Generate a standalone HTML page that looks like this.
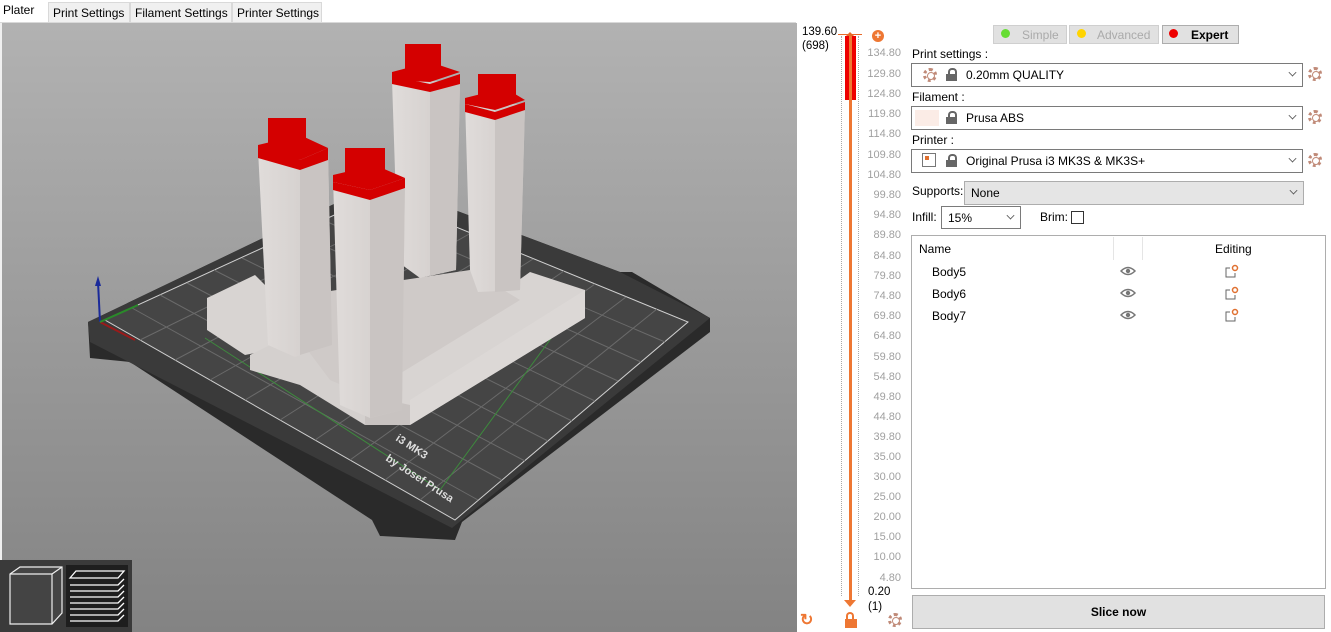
<!DOCTYPE html>
<html><head><meta charset="utf-8"><style>
*{box-sizing:border-box;margin:0;padding:0}
body{width:1331px;height:632px;overflow:hidden;background:#fff;font-family:"Liberation Sans",sans-serif;font-size:12px;color:#000;position:relative}
.abs{position:absolute}
.tab{position:absolute;top:2px;height:20px;border:1px solid #d9d9d9;border-bottom:none;background:#f0f0f0;font-size:12px;padding:3px 4px 0 4px;white-space:nowrap}
.lbl{position:absolute;font-size:12px}
.combo{position:absolute;height:24px;border:1px solid #7a7a7a;background:#fff;font-size:12px;padding:4px 0 0 6px}
.combo .arr{position:absolute;right:6px;top:5px;width:7px;height:7px;border-right:1px solid #555;border-bottom:1px solid #555;transform:rotate(45deg) scale(.8)}
.tick{position:absolute;right:0;font-size:11px;color:#a0a0a0;width:40px;text-align:right}
.gear{position:absolute;width:14px;height:14px;border-radius:50%;border:3px dotted #c08a78;background:#fff}
.gear:after{content:"";position:absolute;left:1px;top:1px;width:6px;height:6px;border-radius:50%;border:1px solid #c08a78}
.lock{position:absolute;width:11px;height:13px}
.lock:before{content:"";position:absolute;left:2px;top:0;width:5px;height:6px;border:2px solid #666;border-bottom:none;border-radius:4px 4px 0 0}
.lock:after{content:"";position:absolute;left:0;top:6px;width:11px;height:7px;background:#666}
</style></head><body>
<div class="abs" style="left:0;top:22px;width:796px;height:1px;background:#d9d9d9"></div>
<div class="abs" style="left:3px;top:3px;font-size:12px">Plater</div>
<div class="tab" style="left:48px;width:82px">Print Settings</div>
<div class="tab" style="left:130px;width:102px">Filament Settings</div>
<div class="tab" style="left:232px;width:90px">Printer Settings</div>

<svg class="abs" style="left:0;top:23px" width="797" height="609" viewBox="0 23 797 609">
<defs>
<linearGradient id="bg" x1="0" y1="0" x2="0" y2="1"><stop offset="0" stop-color="#b2b2b2"/><stop offset="1" stop-color="#838383"/></linearGradient>
<linearGradient id="tw" x1="0" y1="0" x2="1" y2="0"><stop offset="0" stop-color="#e0dcda"/><stop offset="1" stop-color="#cfcac8"/></linearGradient>
</defs>
<rect x="0" y="23" width="797" height="609" fill="url(#bg)"/>
<rect x="0" y="23" width="2" height="609" fill="#f0f0f0"/>
<!-- bed -->
<polygon points="88,322 380,182 620,272 632,272 710,318 710,332 462,522 455,540 380,536 372,520 130,362 90,358" fill="#2a2a2a"/>
<polygon points="88,322 380,182 620,272 710,318 452,528 90,342" fill="#3a3a3a"/>
<polygon points="105,320 378,195 688,322 455,520" fill="#454545" stroke="#d0d0d0" stroke-width="1"/>
<g stroke="#6a6a6a" stroke-width="1">
<line x1="140" y1="340" x2="409" y2="208"/><line x1="175" y1="360" x2="440" y2="220"/><line x1="210" y1="380" x2="471" y2="233"/><line x1="245" y1="400" x2="502" y2="246"/><line x1="280" y1="420" x2="533" y2="259"/><line x1="315" y1="440" x2="564" y2="271"/><line x1="350" y1="460" x2="595" y2="284"/><line x1="385" y1="480" x2="626" y2="297"/><line x1="420" y1="500" x2="657" y2="309"/>
<line x1="132" y1="308" x2="478" y2="500"/><line x1="160" y1="295" x2="502" y2="480"/><line x1="187" y1="283" x2="525" y2="461"/><line x1="214" y1="270" x2="548" y2="441"/><line x1="242" y1="258" x2="572" y2="421"/><line x1="269" y1="245" x2="595" y2="401"/><line x1="296" y1="233" x2="618" y2="381"/><line x1="323" y1="220" x2="641" y2="362"/><line x1="351" y1="208" x2="665" y2="342"/>
</g>
<polyline points="205,338 440,490 585,292" fill="none" stroke="#3d8a3d" stroke-width="1"/>
<text x="385" y="460" fill="#ddd" font-size="11" font-weight="bold" transform="rotate(33 385 460)" font-family="Liberation Sans">by Josef Prusa</text>
<text x="395" y="440" fill="#ddd" font-size="11" font-weight="bold" transform="rotate(33 395 440)" font-family="Liberation Sans">i3 MK3</text>
<line x1="100" y1="322" x2="98" y2="282" stroke="#1a2a9a" stroke-width="2"/>
<polygon points="95,286 98,276 101,286" fill="#1a2a9a"/>
<line x1="100" y1="322" x2="135" y2="340" stroke="#9a1a1a" stroke-width="2"/>
<line x1="100" y1="322" x2="138" y2="305" stroke="#2a8a2a" stroke-width="2"/>
<!-- base blocks -->
<polygon points="207,298 255,275 270,290 270,350 245,355 207,330" fill="#d8d4d2"/>
<polygon points="250,355 300,330 340,360 365,395 365,425 300,385 250,370" fill="#d4d0ce"/>
<polygon points="365,390 530,272 585,290 585,318 410,425 365,425" fill="#d8d4d2"/>
<polygon points="365,395 410,405 410,425 365,425" fill="#c8c3c1"/>
<polygon points="410,400 585,290 585,318 410,425" fill="#dcd8d6"/>
<polygon points="270,300 470,270 520,300 365,395 330,380" fill="#cfcac8"/>
<!-- towers -->
<polygon points="258,150 300,150 328,150 332,345 295,357 268,345" fill="url(#tw)"/>
<polygon points="392,80 460,82 456,270 420,278 398,262" fill="url(#tw)"/>
<polygon points="465,100 525,105 520,290 478,292 470,270" fill="url(#tw)"/>
<polygon points="333,178 405,178 402,410 370,418 340,405" fill="url(#tw)"/>
<polygon points="300,155 328,150 332,345 300,355" fill="#c9c4c2"/>
<polygon points="430,82 460,82 456,270 430,276" fill="#c9c4c2"/>
<polygon points="495,104 525,105 520,290 495,292" fill="#c9c4c2"/>
<polygon points="370,180 405,180 402,410 370,418" fill="#c9c4c2"/>
<g fill="#d40000">
<polygon points="258,145 300,135 328,148 300,160 258,152"/><rect x="268" y="118" width="38" height="25"/><polygon points="258,145 300,160 300,170 258,158"/><polygon points="300,160 328,148 328,160 300,170"/>
<polygon points="333,175 375,165 405,178 370,190 333,182"/><rect x="345" y="148" width="40" height="25"/><polygon points="333,182 370,190 370,200 333,190"/><polygon points="370,190 405,178 405,188 370,200"/>
<polygon points="392,72 430,62 460,72 430,82 392,80"/><rect x="405" y="44" width="36" height="25"/><polygon points="392,76 430,84 430,92 392,84"/><polygon points="430,84 460,74 460,84 430,92"/>
<polygon points="465,98 505,88 525,100 495,110 465,104"/><rect x="478" y="74" width="38" height="25"/><polygon points="465,104 495,112 495,120 465,112"/><polygon points="495,112 525,102 525,110 495,120"/>
</g>
<rect x="0" y="560" width="132" height="72" fill="#3a3a3a"/>
<rect x="66" y="565" width="62" height="62" fill="#1e1e1e"/>
<polygon points="10,574 20,567 62,567 62,613 52,624 10,624" fill="#444" stroke="#eee" stroke-width="1.2"/>
<polyline points="10,574 52,574 52,624" fill="none" stroke="#eee" stroke-width="1.2"/><line x1="52" y1="574" x2="62" y2="567" stroke="#eee" stroke-width="1.2"/>
<g stroke="#fff" stroke-width="1.3" fill="none"><path d="M70 578l6-7h48l-6 7z"/><path d="M70 585h48l6-6M70 591h48l6-6M70 597h48l6-6M70 603h48l6-6M70 609h48l6-6M70 615h48l6-6M70 621h48l6-6"/></g>
</svg>

<div class="abs" style="left:797px;top:23px;width:112px;height:609px;background:#fff"></div>
<div class="abs" style="left:802px;top:25px;font-size:11.5px;line-height:14px">139.60<br>(698)</div>
<div class="abs" style="left:838px;top:34px;width:24px;height:1px;background:#e86a2a"></div>
<div class="abs" style="left:845px;top:32px;width:0;height:0;border-left:5px solid transparent;border-right:5px solid transparent;border-bottom:5px solid #e86a2a"></div>
<div class="abs" style="left:841px;top:36px;width:1px;height:560px;border-left:1px dotted #aaa"></div>
<div class="abs" style="left:858px;top:36px;width:1px;height:560px;border-left:1px dotted #aaa"></div>
<div class="abs" style="left:845px;top:36px;width:11px;height:64px;background:#e00"></div>
<div class="abs" style="left:849px;top:36px;width:3px;height:565px;background:#ee7733"></div>
<div class="abs" style="left:844px;top:600px;width:0;height:0;border-left:6px solid transparent;border-right:6px solid transparent;border-top:7px solid #ee7733"></div>
<div class="abs" style="left:872px;top:30px;width:12px;height:12px;border-radius:50%;background:#ee7733;color:#fff;font-size:11px;line-height:12px;text-align:center;font-weight:bold">+</div>
<div class="abs" style="left:857px;top:0;width:44px;height:632px">
<div class="tick" style="top:47px">134.80</div><div class="tick" style="top:68px">129.80</div><div class="tick" style="top:88px">124.80</div><div class="tick" style="top:108px">119.80</div><div class="tick" style="top:128px">114.80</div><div class="tick" style="top:149px">109.80</div><div class="tick" style="top:169px">104.80</div><div class="tick" style="top:189px">99.80</div><div class="tick" style="top:209px">94.80</div><div class="tick" style="top:229px">89.80</div><div class="tick" style="top:250px">84.80</div><div class="tick" style="top:270px">79.80</div><div class="tick" style="top:290px">74.80</div><div class="tick" style="top:310px">69.80</div><div class="tick" style="top:330px">64.80</div><div class="tick" style="top:351px">59.80</div><div class="tick" style="top:371px">54.80</div><div class="tick" style="top:391px">49.80</div><div class="tick" style="top:411px">44.80</div><div class="tick" style="top:431px">39.80</div><div class="tick" style="top:451px">35.00</div><div class="tick" style="top:471px">30.00</div><div class="tick" style="top:491px">25.00</div><div class="tick" style="top:511px">20.00</div><div class="tick" style="top:531px">15.00</div><div class="tick" style="top:551px">10.00</div><div class="tick" style="top:572px">4.80</div>
</div>
<div class="abs" style="left:868px;top:585px;font-size:11.5px;line-height:15px">0.20<br>(1)</div>
<div class="abs" style="left:800px;top:610px;color:#ee7733;font-size:16px;font-weight:bold">↻</div>
<div class="abs" style="left:845px;top:619px;width:12px;height:9px;background:#ee7733"></div>
<div class="abs" style="left:846px;top:612px;width:8px;height:8px;border:2px solid #ee7733;border-bottom:none;border-radius:4px 4px 0 0"></div>
<div class="gear" style="left:888px;top:613px"></div>

<div class="abs" style="left:993px;top:25px;width:74px;height:19px;background:#e1e1e1;border:1px solid #cfcfcf;color:#aaa;padding:2px 0 0 28px">Simple</div>
<div class="abs" style="left:1001px;top:29px;width:9px;height:9px;border-radius:50%;background:#66dd33"></div>
<div class="abs" style="left:1069px;top:25px;width:90px;height:19px;background:#e1e1e1;border:1px solid #cfcfcf;color:#aaa;padding:2px 0 0 27px">Advanced</div>
<div class="abs" style="left:1077px;top:29px;width:9px;height:9px;border-radius:50%;background:#ffd400"></div>
<div class="abs" style="left:1162px;top:25px;width:77px;height:19px;background:#e1e1e1;border:1px solid #adadad;font-weight:bold;padding:2px 0 0 28px">Expert</div>
<div class="abs" style="left:1169px;top:29px;width:9px;height:9px;border-radius:50%;background:#e00"></div>

<div class="lbl" style="left:912px;top:47px">Print settings :</div>
<div class="combo" style="left:911px;top:63px;width:392px;padding-left:54px">0.20mm QUALITY<span class="arr"></span></div>
<div class="gear" style="left:923px;top:68px"></div><div class="lock" style="left:946px;top:68px"></div>
<div class="gear" style="left:1308px;top:67px"></div>

<div class="lbl" style="left:912px;top:90px">Filament :</div>
<div class="combo" style="left:911px;top:106px;width:392px;padding-left:54px">Prusa ABS<span class="arr"></span></div>
<div class="abs" style="left:915px;top:110px;width:24px;height:16px;background:#fbece6"></div><div class="lock" style="left:946px;top:111px"></div>
<div class="gear" style="left:1308px;top:110px"></div>

<div class="lbl" style="left:912px;top:133px">Printer :</div>
<div class="combo" style="left:911px;top:149px;width:392px;padding-left:54px">Original Prusa i3 MK3S &amp; MK3S+<span class="arr"></span></div>
<div class="abs" style="left:922px;top:153px;width:14px;height:14px;border:1px solid #777"></div><div class="abs" style="left:925px;top:156px;width:4px;height:4px;background:#e07030"></div>
<div class="lock" style="left:946px;top:154px"></div>
<div class="gear" style="left:1308px;top:153px"></div>

<div class="lbl" style="left:912px;top:184px">Supports:</div>
<div class="combo" style="left:964px;top:181px;width:340px;background:#e5e5e5;border-color:#adadad">None<span class="arr"></span></div>
<div class="lbl" style="left:912px;top:210px">Infill:</div>
<div class="combo" style="left:941px;top:206px;width:80px;height:23px">15%<span class="arr"></span></div>
<div class="lbl" style="left:1040px;top:210px">Brim:</div>
<div class="abs" style="left:1071px;top:211px;width:13px;height:13px;border:1px solid #333"></div>

<div class="abs" style="left:911px;top:235px;width:415px;height:354px;border:1px solid #adadad"></div>
<div class="abs" style="left:1113px;top:237px;width:1px;height:23px;background:#e5e5e5"></div>
<div class="abs" style="left:1142px;top:237px;width:1px;height:23px;background:#e5e5e5"></div>
<div class="lbl" style="left:919px;top:242px">Name</div>
<div class="lbl" style="left:1215px;top:242px">Editing</div>
<div class="lbl" style="left:932px;top:265px">Body5</div>
<div class="lbl" style="left:932px;top:287px">Body6</div>
<div class="lbl" style="left:932px;top:309px">Body7</div>
<svg class="abs" style="left:1120px;top:264px" width="20" height="60"><g fill="none" stroke="#777" stroke-width="1.5"><path d="M1 7q7-7 14 0q-7 7-14 0z"/><path d="M1 29q7-7 14 0q-7 7-14 0z"/><path d="M1 51q7-7 14 0q-7 7-14 0z"/></g><g fill="#777"><circle cx="8" cy="7" r="2.2"/><circle cx="8" cy="29" r="2.2"/><circle cx="8" cy="51" r="2.2"/></g></svg>
<svg class="abs" style="left:1224px;top:264px" width="20" height="60"><g fill="none" stroke="#666" stroke-width="1"><path d="M6 4H2v9h9V9"/><path d="M6 26H2v9h9v-4"/><path d="M6 48H2v9h9v-4"/></g><g fill="none" stroke="#e07030" stroke-width="1.5"><circle cx="11" cy="4" r="2.5"/><circle cx="11" cy="26" r="2.5"/><circle cx="11" cy="48" r="2.5"/></g></svg>

<div class="abs" style="left:912px;top:595px;width:413px;height:34px;background:#e1e1e1;border:1px solid #adadad;font-weight:bold;text-align:center;line-height:32px">Slice now</div>
</body></html>
